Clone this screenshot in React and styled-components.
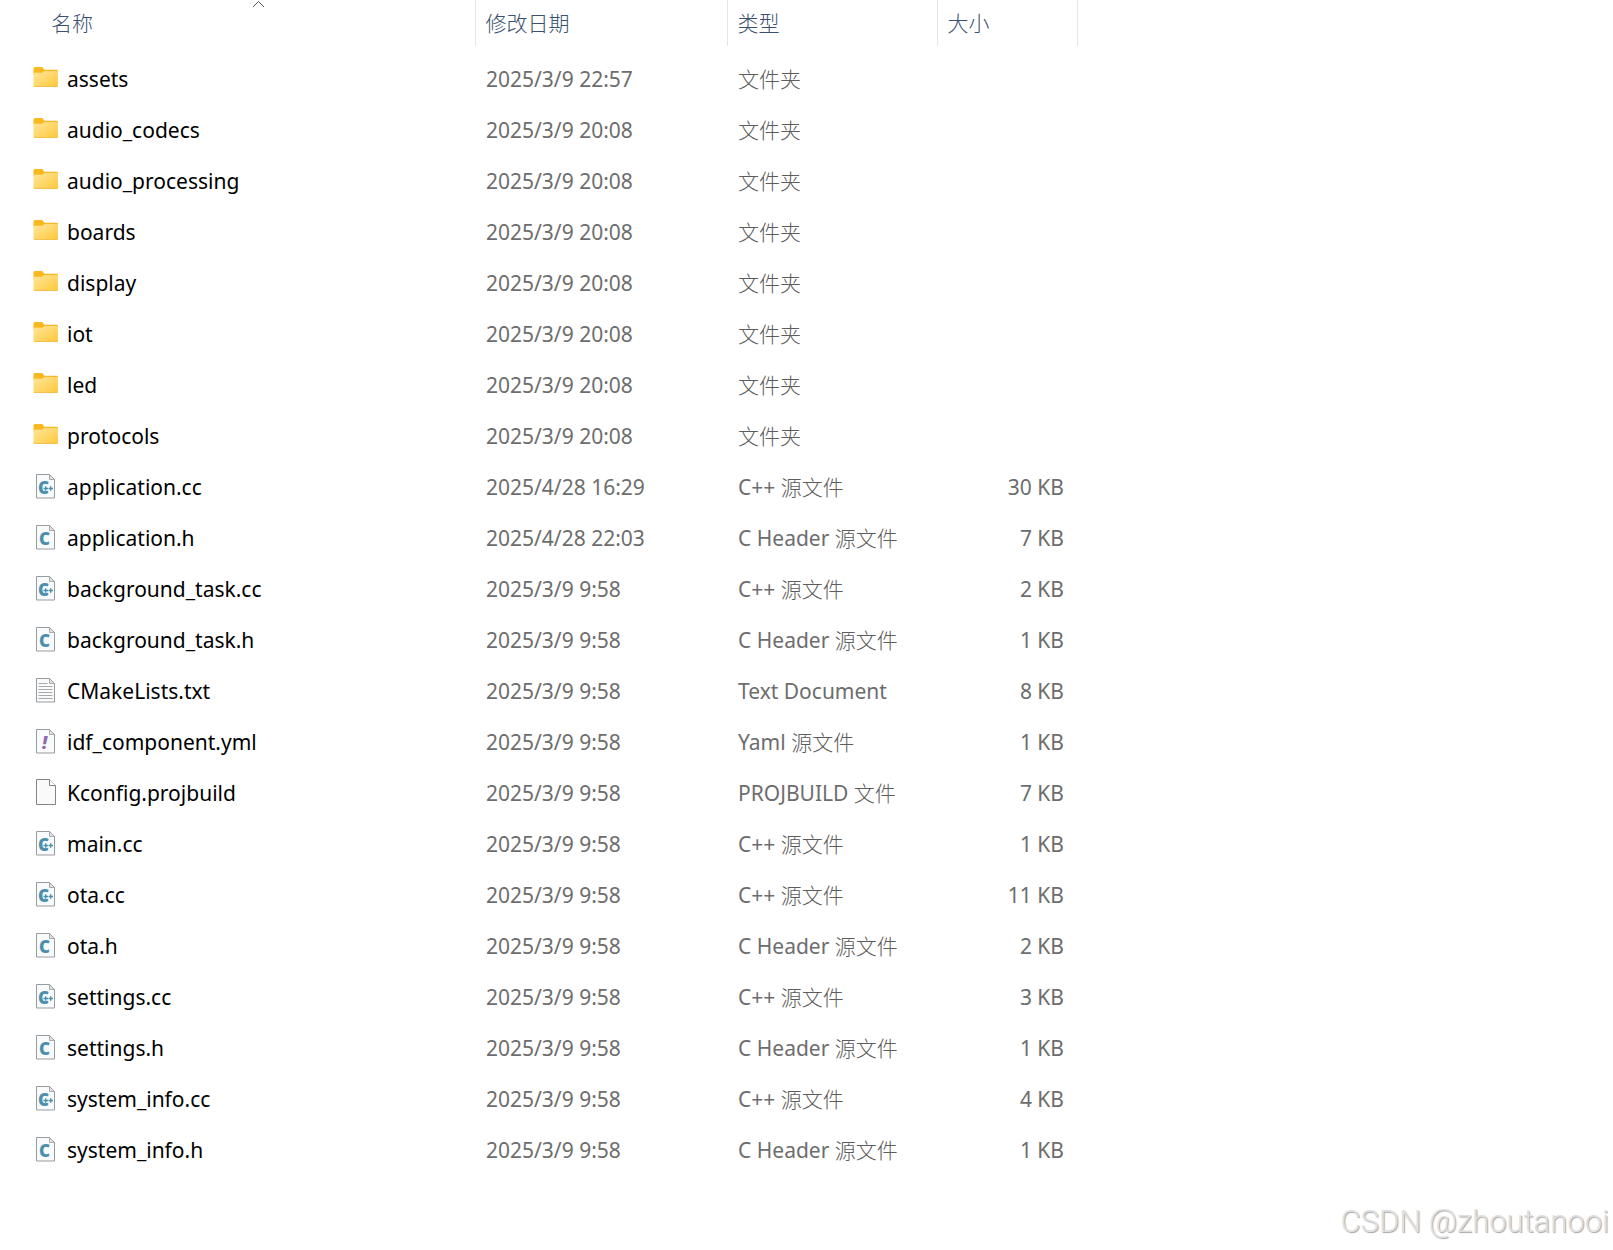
import React, { useState } from "react";
import styled, { createGlobalStyle } from "styled-components";

const GlobalStyle = createGlobalStyle`
  * {
    box-sizing: border-box;
  }
  body {
    margin: 0;
    background: #ffffff;
    font-family: "Noto Sans", "Noto Sans CJK SC", sans-serif;
    font-size: 21px;
    line-height: 30px;
  }
`;

const StyledExplorer = styled.main`
  position: relative;
  min-height: 100vh;
`;

const FileTable = styled.table`
  width: 100%;
  table-layout: fixed;
  border-collapse: collapse;
  thead::after {
    content: "";
    display: block;
    height: 7px;
  }
`;

const Column = styled.col`
  width: ${({ $width }) => ($width ? `${$width}px` : "auto")};
`;

const HeadCell = styled.th`
  height: 46px;
  padding: 0;
  border-right: ${({ $last }) => ($last ? "none" : "1px solid #e5e5e5")};
  font-weight: 300;
  text-align: left;
`;

const HeadButton = styled.button`
  position: relative;
  display: block;
  width: 100%;
  height: 46px;
  padding: 0 10px 0 ${({ $first }) => ($first ? 51 : 10)}px;
  border: none;
  background: none;
  color: #3a5070;
  font: inherit;
  line-height: 46px;
  text-align: left;
  svg {
    position: absolute;
    top: 0;
    left: 252px;
  }
`;

const Cell = styled.td`
  height: 51px;
  padding: 0 ${({ $right }) => ($right ? 13 : 10)}px 0 11px;
  color: #6d6d6d;
  text-align: ${({ $right }) => ($right ? "right" : "left")};
  white-space: nowrap;
`;

const NameCell = styled(Cell)`
  padding-left: 33px;
  color: #000000;
`;

const FileName = styled.div`
  display: flex;
  align-items: center;
  gap: 8px;
  svg {
    flex: none;
    margin-bottom: 2px;
    overflow: visible;
  }
`;

const KindSuffix = styled.span`
  color: #5c5c5c;
  font-weight: 300;
`;

const Watermark = styled.div`
  position: absolute;
  right: 4px;
  bottom: 10px;
  color: #e0e0e0;
  font-family: Roboto, "Liberation Sans", sans-serif;
  font-size: 31px;
  font-weight: 300;
  line-height: 36px;
  text-shadow: 1px 1px 1px #a6a6a6;
`;

const FolderIcon = () => (
  <svg width="26" height="26" viewBox="0 0 26 26" aria-hidden="true">
    <defs>
      <linearGradient id="folder" x1="0" y1="0" x2="1" y2="1">
        <stop offset="0" stopColor="#ffe69c" />
        <stop offset="1" stopColor="#ffc83a" />
      </linearGradient>
    </defs>
    <path d="M.5 3.500Q.5 2 2 2h7.200l2.300 2.700h12Q25 4.700 25 6v4H.5z" fill="#f8b81f" />
    <path d="M.5 7.800h8.300q.8 0 1.400-.7l.6-.6q.5-.6 1.300-.6H24q1 0 1 1v13.600q0 1.500-1.500 1.500H2Q.5 22 .5 20.500z" fill="url(#folder)" />
    <path d="M1 21.500h23.500" stroke="#f0bb45" strokeWidth=".8" />
  </svg>
);

const Page = ({ children }) => (
  <svg width="26" height="26" viewBox="0 0 26 26" aria-hidden="true">
    <path d="M3.500 1.500h13l5 5v18.500h-18z" fill="#f8fafc" stroke="#989b9e" />
    <path d="M16.500 1.500v5h5z" fill="#dfe1e3" stroke="#989b9e" strokeWidth=".8" />
    {children}
  </svg>
);

const Glyph = styled.text`
  font-family: "Open Sans", "Noto Sans", sans-serif;
  font-weight: 800;
  font-size: ${({ $size }) => $size}px;
  font-style: ${({ $italic }) => ($italic ? "italic" : "normal")};
`;

const CppIcon = () => (
  <Page>
    <Glyph x="5" y="21" $size={17} fill="#4b8fac">
      C
    </Glyph>
    <path d="M11.500 15.500h8.500" stroke="#f8fafc" strokeWidth="4" />
    <path d="M10.500 15.500h4.500M12.700 13.300v4.400M15.500 15.500h4.500M17.700 13.300v4.400" stroke="#4b8fac" strokeWidth="1.400" />
  </Page>
);

const HeaderIcon = () => (
  <Page>
    <Glyph x="6" y="21" $size={17} fill="#4b8fac">
      C
    </Glyph>
  </Page>
);

const YamlIcon = () => (
  <Page>
    <Glyph x="9" y="21" $size={17} $italic fill="#9068b0">
      !
    </Glyph>
  </Page>
);

const TextIcon = () => (
  <Page>
    <path
      d="M5.500 6.500h9M5.500 9.500h14M5.500 12.500h14M5.500 15.500h14M5.500 18.500h14M5.500 21.500h14"
      stroke="#a9a9a9"
    />
  </Page>
);

const BlankIcon = () => (
  <svg width="26" height="26" viewBox="0 0 26 26" aria-hidden="true">
    <path d="M3.500.5h13l6 6v19h-19z" fill="#fafafa" stroke="#858585" />
    <path d="M16.500.5v6h6" fill="#ffffff" stroke="#858585" />
  </svg>
);

const kinds = {
  folder: { icon: FolderIcon, suffix: "文件夹" },
  cpp: { icon: CppIcon, prefix: "C++ ", suffix: "源文件" },
  header: { icon: HeaderIcon, prefix: "C Header ", suffix: "源文件" },
  yaml: { icon: YamlIcon, prefix: "Yaml ", suffix: "源文件" },
  text: { icon: TextIcon, prefix: "Text Document" },
  blank: { icon: BlankIcon, prefix: "PROJBUILD ", suffix: "文件" },
};

const columns = [
  { key: "name", title: "名称", width: 475 },
  { key: "date", title: "修改日期", width: 252 },
  { key: "kind", title: "类型", width: 210 },
  { key: "size", title: "大小", width: 140 },
];

const files = [
  { name: "assets", date: "2025/3/9 22:57", kind: "folder" },
  { name: "audio_codecs", date: "2025/3/9 20:08", kind: "folder" },
  { name: "audio_processing", date: "2025/3/9 20:08", kind: "folder" },
  { name: "boards", date: "2025/3/9 20:08", kind: "folder" },
  { name: "display", date: "2025/3/9 20:08", kind: "folder" },
  { name: "iot", date: "2025/3/9 20:08", kind: "folder" },
  { name: "led", date: "2025/3/9 20:08", kind: "folder" },
  { name: "protocols", date: "2025/3/9 20:08", kind: "folder" },
  { name: "application.cc", date: "2025/4/28 16:29", kind: "cpp", size: 30 },
  { name: "application.h", date: "2025/4/28 22:03", kind: "header", size: 7 },
  { name: "background_task.cc", date: "2025/3/9 9:58", kind: "cpp", size: 2 },
  { name: "background_task.h", date: "2025/3/9 9:58", kind: "header", size: 1 },
  { name: "CMakeLists.txt", date: "2025/3/9 9:58", kind: "text", size: 8 },
  { name: "idf_component.yml", date: "2025/3/9 9:58", kind: "yaml", size: 1 },
  { name: "Kconfig.projbuild", date: "2025/3/9 9:58", kind: "blank", size: 7 },
  { name: "main.cc", date: "2025/3/9 9:58", kind: "cpp", size: 1 },
  { name: "ota.cc", date: "2025/3/9 9:58", kind: "cpp", size: 11 },
  { name: "ota.h", date: "2025/3/9 9:58", kind: "header", size: 2 },
  { name: "settings.cc", date: "2025/3/9 9:58", kind: "cpp", size: 3 },
  { name: "settings.h", date: "2025/3/9 9:58", kind: "header", size: 1 },
  { name: "system_info.cc", date: "2025/3/9 9:58", kind: "cpp", size: 4 },
  { name: "system_info.h", date: "2025/3/9 9:58", kind: "header", size: 1 },
];

const App = () => {
  const [ascending, setAscending] = useState(true);
  const rows = ascending ? files : [...files].reverse();

  return (
    <StyledExplorer>
      <GlobalStyle />
      <FileTable>
        <colgroup>
          {columns.map((column) => (
            <Column key={column.key} $width={column.width} />
          ))}
          <Column />
        </colgroup>
        <thead>
          <tr>
            {columns.map((column, index) => (
              <HeadCell key={column.key} scope="col">
                <HeadButton type="button" $first={index === 0} onClick={() => setAscending(!ascending)}>
                  {column.title}
                  {index === 0 && (
                    <svg width="13" height="9" viewBox="0 0 13 9" aria-hidden="true">
                      <path d={ascending ? "M1 7l5.500-5.500L12 7" : "M1 1.500L6.500 7 12 1.500"} fill="none" stroke="#555555" />
                    </svg>
                  )}
                </HeadButton>
              </HeadCell>
            ))}
            <HeadCell as="td" $last />
          </tr>
        </thead>
        <tbody>
          {rows.map((file) => {
            const { icon: Icon, prefix, suffix } = kinds[file.kind];
            return (
              <tr key={file.name}>
                <NameCell>
                  <FileName>
                    <Icon />
                    {file.name}
                  </FileName>
                </NameCell>
                <Cell>{file.date}</Cell>
                <Cell>
                  {prefix}
                  {suffix && <KindSuffix>{suffix}</KindSuffix>}
                </Cell>
                <Cell $right>{file.size && `${file.size} KB`}</Cell>
                <Cell />
              </tr>
            );
          })}
        </tbody>
      </FileTable>
      <Watermark>CSDN @zhoutanooi</Watermark>
    </StyledExplorer>
  );
};

export default App;
